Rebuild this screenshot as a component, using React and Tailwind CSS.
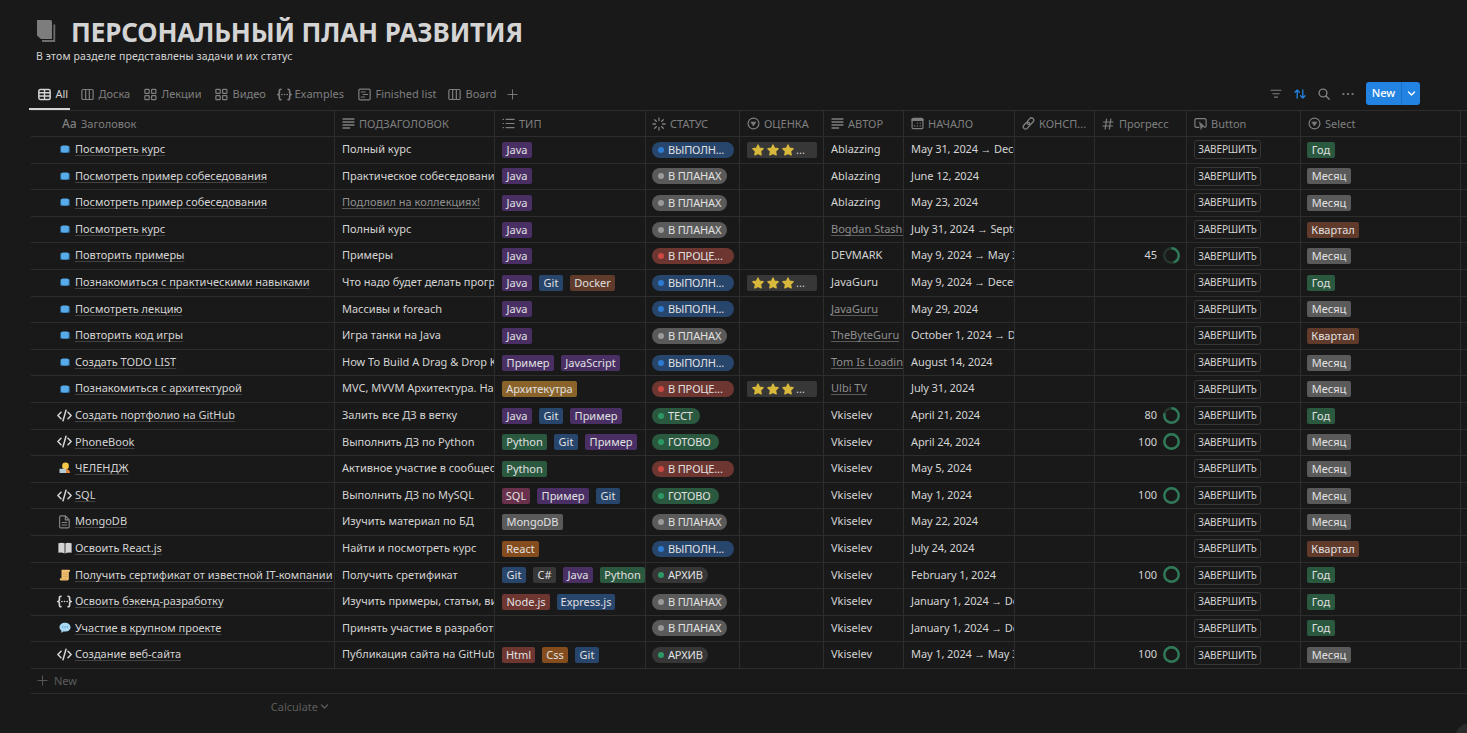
import React from "react";

const S = ({ children, size = 11, className = "", ...p }) => (
  <svg width={size} height={size} viewBox="0 0 12 12" fill="none" stroke="currentColor" strokeWidth="1.1" strokeLinecap="round" strokeLinejoin="round" className={"shrink-0 " + className} {...p}>
    {children}
  </svg>
);

const TableIcon = () => (
  <S size={13}><rect x="0.8" y="1.4" width="10.4" height="9.2" rx="1.4" strokeWidth="1.4" /><path d="M1 4.4h10M1 7.4h10M6 1.8v8.6" strokeWidth="1.3" /></S>
);
const BoardIcon = () => (
  <S size={13}><rect x="0.8" y="1.4" width="10.4" height="9.2" rx="1.2" /><path d="M4.3 1.6v8.8M7.7 1.6v8.8" /></S>
);
const GalleryIcon = () => (
  <S size={13}><rect x="0.8" y="1.2" width="4" height="3.8" rx=".6" /><rect x="7" y="1.2" width="4" height="3.8" rx=".6" /><rect x="0.8" y="7" width="4" height="3.8" rx=".6" /><rect x="7" y="7" width="4" height="3.8" rx=".6" /></S>
);
const Braces = ({ size = 15 }) => (
  <S size={size} strokeWidth="1.3"><path d="M3.2 1.8C2 1.8 1.9 2.300 1.9 3.200v1.200C1.900 5.300 1.500 6 .6 6c.9 0 1.300.7 1.300 1.600v1.200c0 .9.1 1.400 1.300 1.400M8.800 1.800c1.200 0 1.300.5 1.300 1.400v1.200c0 .9.4 1.600 1.300 1.600-.9 0-1.300.7-1.300 1.600v1.200c0 .9-.1 1.400-1.300 1.400M3.900 6h.1M6 6h.1M8.100 6h.1" /></S>
);
const TimelineIcon = () => (
  <S size={13}><rect x="0.8" y="1" width="10.400" height="10" rx="1.200" /><path d="M3 3.700h3.600M4.800 6h4M3 8.300h3" /></S>
);
const Plus = ({ size = 12 }) => <S size={size} strokeWidth="1"><path d="M6 1v10M1 6h10" /></S>;
const LinesIcon = () => <S size={13} strokeWidth="1.3" strokeLinecap="butt"><path d="M.5 1.800h11M.5 4.600h11M.5 7.400h11M.5 10.200h7" /></S>;
const ListIcon = () => <S size={13}><path d="M1 2.200h.4M1 6h.4M1 9.800h.4M3.800 2.200h7.400M3.800 6h7.400M3.800 9.800h7.400" /></S>;
const StatusIcon = () => <S size={14} className="-ml-px"><path d="M6 .8v2.200M6 9v2.200M.8 6H3M9 6h2.200M2.300 2.300l1.500 1.500M8.200 8.200l1.500 1.500M2.300 9.700l1.500-1.500M8.200 3.800l1.500-1.500" /></S>;
const SelectIcon = () => <S size={13}><circle cx="6" cy="6" r="5" /><path d="M3.800 4.700h4.400L6 8z" fill="currentColor" strokeWidth=".6" /></S>;
const CalIcon = () => <S size={13}><rect x="1" y="1.200" width="10" height="9.600" rx="1.200" /><path d="M1.200 2.700h9.600" strokeWidth="1.800" /><path d="M5.800 5.600h.2M8.400 5.600h.2M3.300 8.200h.2M5.800 8.200h.2M8.400 8.200h.2" /></S>;
const LinkIcon = () => <S size={13} strokeWidth="1.2"><g transform="rotate(-48 6 6)"><rect x="-.2" y="3.900" width="7" height="4.200" rx="2.100" /><rect x="5.200" y="3.900" width="7" height="4.200" rx="2.100" /></g></S>;
const HashIcon = () => <S size={12} strokeWidth="1.2"><path d="M4.600 1L3.200 11M8.800 1L7.400 11M1.500 4h9.600M.9 8h9.600" /></S>;
const ButtonIcon = () => <S size={13}><path d="M4.500 9.500H2.200C1.400 9.500.8 9 .8 8.200V2.800c0-.8.6-1.300 1.400-1.300h7.600c.8 0 1.400.5 1.400 1.300v5.400c0 .8-.5 1.200-1.200 1.300" /><path d="M5.200 4.800l4.600 4.200-2.200.1-1 2z" fill="currentColor" strokeWidth=".6" /></S>;
const Chevron = ({ size = 8 }) => <S size={size} strokeWidth="1.8"><path d="M2 4l4 4 4-4" /></S>;

const Code = () => <S size={15} strokeWidth="1.2"><path d="M3.200 3.400L.7 6l2.500 2.600M8.800 3.400L11.300 6 8.800 8.600M7.200 1.800L4.800 10.200" /></S>;
const Chip = () => (
  <svg width="12" height="12" viewBox="0 0 12 12" className="shrink-0">
    <rect x="1" y="3" width="10" height="7" rx="1.300" fill="#28577c" />
    <rect x="2" y="2.500" width="7.800" height="7" rx="1.800" fill="#56abe8" />
  </svg>
);
const Person = () => (
  <svg width="12" height="12" viewBox="0 0 12 12" className="shrink-0">
    <path d="M2.500 11c0-3 1.500-4 4-4s4.500 1 4.500 4z" fill="#e58a3a" />
    <circle cx="6.500" cy="4" r="3.400" fill="#f6c646" />
    <rect x=".5" y="6.800" width="6.500" height="4.200" rx=".6" fill="#b5c9d6" />
  </svg>
);
const Page = () => <S size={14} strokeWidth="1" className="text-[#858585]"><path d="M1.400 1.800c0-.6.400-1 1-1h4l3.200 3.300v6c0 .6-.4 1-1 1H2.400c-.6 0-1-.4-1-1zM6.300.9v3.300H9.500M3.500 6.400h4M3.500 8.600h4" /></S>;
const Book = () => <svg width="14" height="12" viewBox="0 0 14 12" className="shrink-0"><path d="M.4 1.300Q3.800 0 6.600 1.300V11.500Q3.800 9.900.4 10.800zM7.400 1.300Q10.200 0 13.600 1.300v9.500Q10.200 9.900 7.400 11.500z" fill="#d4d4d4" /></svg>;
const Scroll = () => (
  <svg width="12" height="12" viewBox="0 0 12 12" className="shrink-0">
    <path d="M2.500.7h7.600c1.200 0 1.400 1.900.2 2.100H9.800v7c0 1-.6 1.600-1.400 1.600H1.800c-1.500 0-1.500-2 0-2.100h.7z" fill="#f2c174" />
    <path d="M3.800 3.800h4.700M3.800 5.700h4.700M3.800 7.600h4.700M2 10h6" stroke="#d39b52" strokeWidth=".7" />
  </svg>
);
const Bubble = () => (
  <svg width="12" height="12" viewBox="0 0 12 12" className="shrink-0">
    <path d="M6 .8c3.200 0 5.500 1.900 5.500 4.400S9.200 9.600 6 9.600c-.6 0-1.200 0-1.700-.2L2.400 11V8.500C1.200 7.700.5 6.500.5 5.200.5 2.700 2.800.8 6 .8z" fill="#a9d8f5" />
    <path d="M3 5h1.200M5.400 5h1.200M7.800 5H9" stroke="#4486ad" strokeWidth="1.100" />
  </svg>
);
const Star = () => <svg width="12" height="12" viewBox="0 0 12 12" className="mr-[3px] shrink-0"><path d="M6 1l1.500 3.200 3.600.5-2.600 2.600.7 3.600L6 9.300l-3.200 1.600.7-3.600L.9 4.700l3.600-.5z" fill="#d9b93c" stroke="#d9b93c" strokeWidth="1.300" strokeLinejoin="round" /></svg>;

const rowIcons = { chip: Chip, code: Code, person: Person, page: Page, book: Book, scroll: Scroll, braces: Braces, bubble: Bubble };

const tags = {
  Java: "w-[30px] bg-[#492f64]",
  JavaScript: "w-[59px] bg-[#492f64]",
  "Пример": "w-[52px] bg-[#492f64]",
  Git: "w-[24px] bg-[#28456c]",
  "Express.js": "w-[58px] bg-[#28456c]",
  Docker: "w-[45px] bg-[#603b2c]",
  "Архитекутра": "w-[75px] bg-[#89632a]",
  Python: "w-[45px] bg-[#2b593f]",
  SQL: "w-[28px] bg-[#69314c]",
  MongoDB: "w-[61px] bg-[#5a5a5a]",
  React: "w-[37px] bg-[#854c1d]",
  Css: "w-[26px] bg-[#854c1d]",
  "C#": "w-[23px] bg-[#373737]",
  "Node.js": "w-[48px] bg-[#6e3630]",
  Html: "w-[33px] bg-[#6e3630]",
  "Год": "w-[28px] bg-[#2b593f]",
  "Месяц": "w-[44px] bg-[#5a5a5a]",
  "Квартал": "w-[52px] bg-[#603b2c]",
};
const Tag = ({ t }) => (
  <span className={"flex h-4 shrink-0 items-center justify-center rounded-[2px] text-[11px] leading-4 text-[#e0e0e0] " + tags[t]}>{t}</span>
);

const statuses = {
  done: ["ВЫПОЛН...", "w-[82px] bg-[#28456c]", "bg-[#2e7cd1]"],
  plan: ["В ПЛАНАХ", "w-[75px] bg-[#5a5a5a]", "bg-[#9b9b9b]"],
  proc: ["В ПРОЦЕ...", "w-[82px] bg-[#6e3630]", "bg-[#cd4945]"],
  test: ["ТЕСТ", "w-[48px] bg-[#2b593f]", "bg-[#2d9964]"],
  ready: ["ГОТОВО", "w-[67px] bg-[#2b593f]", "bg-[#2d9964]"],
  arch: ["АРХИВ", "w-[56px] bg-[#373737]", "bg-[#2d9964]"],
};
const Status = ({ s }) => (
  <span className={"flex h-4 items-center rounded-full pl-[6px] text-[11px] leading-4 tracking-[-0.15px] text-[#e0e0e0] " + statuses[s][1]}>
    <span className={"mr-1 size-[6px] shrink-0 rounded-full " + statuses[s][2]} />
    {statuses[s][0]}
  </span>
);

const Ring = ({ v }) => (
  <svg width="17" height="17" viewBox="0 0 17 17" className="ml-[6px]">
    <circle cx="8.500" cy="8.500" r="7.200" fill="none" stroke="#26362e" strokeWidth="2.400" />
    <circle cx="8.500" cy="8.500" r="7.200" fill="none" stroke="#2f7a58" strokeWidth="2.400" pathLength="100" strokeDasharray={v + " 100"} transform="rotate(-90 8.500 8.500)" />
  </svg>
);

const rows = [
  ["chip", "Посмотреть курс", "Полный курс", ["Java"], "done", 1, "Ablazzing", "May 31, 2024 → December", 0, "Год"],
  ["chip", "Посмотреть пример собеседования", "Практическое собеседование", ["Java"], "plan", 0, "Ablazzing", "June 12, 2024", 0, "Месяц"],
  ["chip", "Посмотреть пример собеседования", "@Подловил на коллекциях!", ["Java"], "plan", 0, "Ablazzing", "May 23, 2024", 0, "Месяц"],
  ["chip", "Посмотреть курс", "Полный курс", ["Java"], "plan", 0, "@Bogdan Stashchuk", "July 31, 2024 → September", 0, "Квартал"],
  ["chip", "Повторить примеры", "Примеры", ["Java"], "proc", 0, "DEVMARK", "May 9, 2024 → May 31", 45, "Месяц"],
  ["chip", "Познакомиться с практическими навыками", "Что надо будет делать программисту", ["Java", "Git", "Docker"], "done", 1, "JavaGuru", "May 9, 2024 → December", 0, "Год"],
  ["chip", "Посмотреть лекцию", "Массивы и foreach", ["Java"], "done", 0, "@JavaGuru", "May 29, 2024", 0, "Месяц"],
  ["chip", "Повторить код игры", "Игра танки на Java", ["Java"], "plan", 0, "@TheByteGuru", "October 1, 2024 → December", 0, "Квартал"],
  ["chip", "Создать TODO LIST", "How To Build A Drag & Drop Kanban", ["Пример", "JavaScript"], "done", 0, "@Tom Is Loading", "August 14, 2024", 0, "Месяц"],
  ["chip", "Познакомиться с архитектурой", "MVC, MVVM Архитектура. Наглядно", ["Архитекутра"], "proc", 1, "@Ulbi TV", "July 31, 2024", 0, "Месяц"],
  ["code", "Создать портфолио на GitHub", "Залить все ДЗ в ветку", ["Java", "Git", "Пример"], "test", 0, "Vkiselev", "April 21, 2024", 80, "Год"],
  ["code", "PhoneBook", "Выполнить ДЗ по Python", ["Python", "Git", "Пример"], "ready", 0, "Vkiselev", "April 24, 2024", 100, "Месяц"],
  ["person", "ЧЕЛЕНДЖ", "Активное участие в сообществе", ["Python"], "proc", 0, "Vkiselev", "May 5, 2024", 0, "Месяц"],
  ["code", "SQL", "Выполнить ДЗ по MySQL", ["SQL", "Пример", "Git"], "ready", 0, "Vkiselev", "May 1, 2024", 100, "Месяц"],
  ["page", "MongoDB", "Изучить материал по БД", ["MongoDB"], "plan", 0, "Vkiselev", "May 22, 2024", 0, "Месяц"],
  ["book", "Освоить React.js", "Найти и посмотреть курс", ["React"], "done", 0, "Vkiselev", "July 24, 2024", 0, "Квартал"],
  ["scroll", "Получить сертификат от известной IT-компании", "Получить сретификат", ["Git", "C#", "Java", "Python"], "arch", 0, "Vkiselev", "February 1, 2024", 100, "Год"],
  ["braces", "Освоить бэкенд-разработку", "Изучить примеры, статьи, видео", ["Node.js", "Express.js"], "plan", 0, "Vkiselev", "January 1, 2024 → December", 0, "Год"],
  ["bubble", "Участие в крупном проекте", "Принять участие в разработке", [], "plan", 0, "Vkiselev", "January 1, 2024 → December", 0, "Год"],
  ["code", "Создание веб-сайта", "Публикация сайта на GitHub", ["Html", "Css", "Git"], "arch", 0, "Vkiselev", "May 1, 2024 → May 31", 100, "Месяц"],
];

const W = ["w-[304px]", "w-[160px]", "w-[151px]", "w-[94px]", "w-[84px]", "w-[80px]", "w-[111px]", "w-[80px]", "w-[92px]", "w-[114px]", "w-[160px]"];
const Cell = ({ i, className = "", children }) => (
  <div className={"flex shrink-0 items-center overflow-hidden whitespace-nowrap border-r border-[#2d2d2d] pl-[7px] " + W[i] + " " + className}>{children}</div>
);
const underline = "underline decoration-1 underline-offset-2 [text-decoration-skip-ink:none] ";
const Text = ({ t }) =>
  t[0] === "@" ? <span className={underline + "text-[#8f8f8f] decoration-[#5a5a5a]"}>{t.slice(1)}</span> : <span>{t}</span>;

const heads = [
  [null, "Заголовок"], [LinesIcon, "ПОДЗАГОЛОВОК"], [ListIcon, "ТИП"], [StatusIcon, "СТАТУС"], [SelectIcon, "ОЦЕНКА"], [LinesIcon, "АВТОР"],
  [CalIcon, "НАЧАЛО"], [LinkIcon, "КОНСП..."], [HashIcon, "Прогресс"], [ButtonIcon, "Button"], [SelectIcon, "Select"],
];

const tabs = [
  [TableIcon, "All", "w-[43px]"], [BoardIcon, "Доска", "w-[63px]"], [GalleryIcon, "Лекции", "w-[71px]"], [GalleryIcon, "Видео", "w-[62px]"],
  [Braces, "Examples", "w-[81px]"], [TimelineIcon, "Finished list", "w-[90px]"], [BoardIcon, "Board", "w-[59px]"],
];

export default function App() {
  return (
    <div className="relative h-[733px] w-[1467px] overflow-hidden bg-[#191919] font-['Noto_Sans','Open_Sans',sans-serif] text-[11px] text-[#d4d4d4]">
      <header className="h-[78px] pl-9 pt-[14px]">
        <div className="flex h-9 items-center">
          <svg width="22" height="24" viewBox="0 0 22 24" className="mb-[3px] mr-[13px]">
            <path d="M18.300 5.500V22H6" fill="none" stroke="#6d6d6d" strokeWidth="1.800" />
            <path d="M1.500 1h13a1.500 1.500 0 0 1 1.500 1.500V20H5L1 16.500V1.500z" fill="#7d7d7d" />
          </svg>
          <h1 className="whitespace-nowrap text-[26px] font-bold leading-9 tracking-[-0.12px]">ПЕРСОНАЛЬНЫЙ ПЛАН РАЗВИТИЯ</h1>
        </div>
        <p className="mt-[-1px] text-[10.500px] leading-[14px] tracking-[0.15px]">В этом разделе представлены задачи и их статус</p>
      </header>
      <nav className="ml-[31px] flex h-8 items-stretch text-[#7f7f7f]">
        <div className="flex pl-[7px]">
          {tabs.map(([Icon, t, w], i) => (
            <div key={t} className={"flex items-center whitespace-nowrap " + w + (i === 0 ? " relative text-[#d4d4d4]" : "")}>
              <span className="flex w-[17.500px] shrink-0"><Icon /></span>
              {t}
              {i === 0 && <span className="absolute bottom-0 left-[-9px] h-[2px] w-[41px] bg-[#d4d4d4]" />}
            </div>
          ))}
          <div className="flex items-center"><Plus size={11} /></div>
        </div>
        <div className="mb-px ml-auto mr-[47px] flex items-center gap-[12px]">
          <S size={12}><path d="M1 2.300h10M2.800 5.700h6.400M4.500 9.100h3" /></S>
          <S size={12} className="text-[#2383e2]" strokeWidth="1.3"><path d="M3.200 10.200V2M1 4.200L3.200 2l2.200 2.200M8.800 1.800V10M6.600 7.800L8.800 10 11 7.800" /></S>
          <S size={12} strokeWidth="1.4"><circle cx="5" cy="5" r="3.900" /><path d="M8 8l3.200 3.200" /></S>
          <S size={12} strokeWidth="2.2"><path d="M1.400 6h.1M6 6h.1M10.500 6h.1" /></S>
          <div className="flex h-[23px] w-[54px] items-center overflow-hidden rounded-[3px] bg-[#2383e2] font-medium text-white">
            <span className="w-[36px] border-r border-[#1f6fc0] pb-px text-center leading-[22px]">New</span>
            <span className="flex flex-1 justify-center"><Chevron size={9} /></span>
          </div>
        </div>
      </nav>
      <main className="ml-[31px] border-t border-[#2d2d2d]">
        <div className="flex h-[26px] border-b border-[#2d2d2d] text-[#7f7f7f]">
          {heads.map(([Icon, t], i) => (
            <Cell key={t} i={i} className={i === 0 ? "!pl-[31px]" : ""}>
              {Icon ? <span className="flex w-[17px] shrink-0"><Icon /></span> : <span className="w-[19px] text-[12px] font-medium">Aa</span>}
              <span className="pt-px">{t}</span>
            </Cell>
          ))}
        </div>
        {rows.map(([ic, title, sub, tg, st, stars, author, date, prog, sel], r) => {
          const Icon = rowIcons[ic];
          return (
            <div key={r} className="flex h-[26.600px] border-b border-[#2d2d2d]">
              <Cell i={0} className="!pl-[26px] pb-px">
                <span className="mr-[3px] flex w-[15px] shrink-0 justify-center"><Icon /></span>
                <span className={underline + "decoration-[#424242]"}>{title}</span>
              </Cell>
              <Cell i={1} className="pb-px"><Text t={sub} /></Cell>
              <Cell i={2} className="gap-[7px]">{tg.map((t) => <Tag key={t} t={t} />)}</Cell>
              <Cell i={3} className="!pl-[6px]"><Status s={st} /></Cell>
              <Cell i={4}>{stars ? <span className="flex h-4 w-[70px] items-center rounded-[2px] bg-[#373737] pl-[5px]"><Star /><Star /><Star /><span className="-ml-px">...</span></span> : null}</Cell>
              <Cell i={5} className="pb-px"><Text t={author} /></Cell>
              <Cell i={6} className="pb-px tracking-[-0.1px]">
                {date.split(" → ").map((d, k) => (k ? <span key={k}><span className="mx-[2px] inline-block w-3 text-center">→</span>{d}</span> : <span key={k}>{d}</span>))}
              </Cell>
              <Cell i={7} />
              <Cell i={8} className="justify-end pb-px pr-[6px]">{prog ? <>{prog}<Ring v={prog} /></> : null}</Cell>
              <Cell i={9}><span className="flex h-[19px] w-[67px] items-center justify-center rounded-[3px] border border-[#373737] text-[10px] tracking-[-0.15px]">ЗАВЕРШИТЬ</span></Cell>
              <Cell i={10} className="!pl-[6px]"><Tag t={sel} /></Cell>
            </div>
          );
        })}
        <div className="flex h-[25px] items-center gap-[6px] border-b border-[#2d2d2d] pl-[6px] text-[#5c5c5c]"><Plus size={11} />New</div>
        <div className="flex h-[26px] w-[298px] items-center justify-end gap-[2px] text-[#5c5c5c]">Calculate <Chevron size={9} /></div>
      </main>
      <div className="absolute left-[1455px] top-[723px] size-[30px] rounded-full bg-[#2b2b2b]" />
    </div>
  );
}
